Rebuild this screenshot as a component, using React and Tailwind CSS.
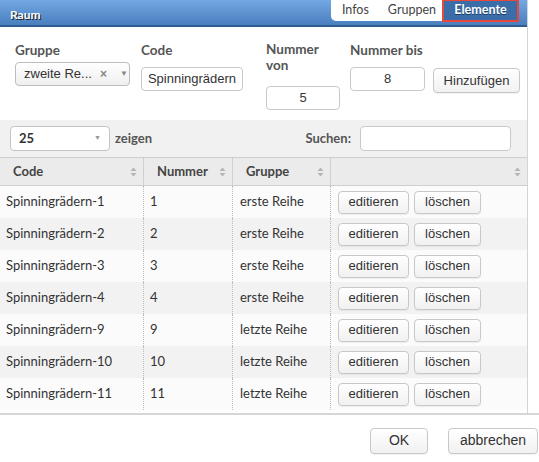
const ui = { fontFamily: '"Liberation Sans", Arial, sans-serif' };
const lato = { fontFamily: 'Lato, "Noto Sans", sans-serif' };

const rows = [
  ['Spinningrädern-1', '1', 'erste Reihe'],
  ['Spinningrädern-2', '2', 'erste Reihe'],
  ['Spinningrädern-3', '3', 'erste Reihe'],
  ['Spinningrädern-4', '4', 'erste Reihe'],
  ['Spinningrädern-9', '9', 'letzte Reihe'],
  ['Spinningrädern-10', '10', 'letzte Reihe'],
  ['Spinningrädern-11', '11', 'letzte Reihe'],
];

function SortIcon() {
  return (
    <svg width="7" height="10" viewBox="0 0 7 10" className="shrink-0">
      <path d="M3.5 0.5 L6.5 4 L0.5 4 Z" fill="#b5b5b5" />
      <path d="M3.5 9.5 L6.5 6 L0.5 6 Z" fill="#b5b5b5" />
    </svg>
  );
}

function Btn({ children, className = '' }) {
  return (
    <button
      style={ui}
      className={`rounded-[4px] border border-[#c8c8c8] bg-gradient-to-b from-white to-[#f1f1f1] text-[13px] text-[#333] shadow-[0_1px_1px_rgba(0,0,0,0.06)] ${className}`}
    >
      {children}
    </button>
  );
}

function Field({ value, className = '' }) {
  return (
    <div
      style={ui}
      className={`flex items-center justify-center rounded-[4px] border border-[#c9c9c9] bg-white text-[13px] text-[#333] ${className}`}
    >
      {value}
    </div>
  );
}

function Label({ children, className = '' }) {
  return (
    <div style={lato} className={`text-[13.5px] font-bold leading-[16px] text-[#555] ${className}`}>
      {children}
    </div>
  );
}

export default function App() {
  return (
    <div className="relative h-[462px] w-[539px] overflow-hidden bg-white">
      <div className="flex h-[413px] w-[528px] flex-col border-r border-[#d4d4d4]">
        {/* header */}
        <div className="flex h-[27px] shrink-0 items-start justify-between border-b-2 border-[#2f5d8f] bg-gradient-to-b from-[#72a8e3] to-[#4a7fbf] pl-[10px] pr-[8px]">
          <div
            style={lato}
            className="mt-[6px] text-[12px] font-bold text-white [text-shadow:1px_1px_0_#1d1d1d]"
          >
            Raum
          </div>
          <div
            style={lato}
            className="flex h-[21px] items-center rounded-b-[5px] bg-white pl-[11px] text-[12.5px] text-[#444]"
          >
            <span className="mr-[19px]">Infos</span>
            <span className="mr-[6px]">Gruppen</span>
            <span className="flex h-[23px] w-[77px] items-center justify-center border-2 border-[#e8483c] bg-[#3b6ea9] font-bold text-white [text-shadow:0_1px_0_#1d3c63]">
              Elemente
            </span>
          </div>
        </div>

        {/* form */}
        <div className="flex h-[93px] shrink-0 pl-[15px] pt-[14px]">
          <div className="w-[126px]">
            <Label className="mt-[1px]">Gruppe</Label>
            <div
              style={ui}
              className="mt-[4px] flex h-[24px] w-[115px] items-center rounded-[4px] border border-[#bdbdbd] bg-gradient-to-b from-white to-[#efefef] pl-[8px] text-[13px] text-[#333]"
            >
              <span>zweite Re...</span>
              <span className="ml-[8px] text-[12px] font-bold text-[#888]">×</span>
              <span className="ml-[13px] text-[8px] text-[#888]">▼</span>
            </div>
          </div>
          <div className="w-[125px]">
            <Label className="mt-[1px]">Code</Label>
            <Field value="Spinningrädern" className="mt-[9px] h-[24px] w-[102px]" />
          </div>
          <div className="w-[84px]">
            <Label>
              Nummer
              <br />
              von
            </Label>
            <Field value="5" className="mt-[13px] h-[24px] w-[74px]" />
          </div>
          <div className="w-[83px]">
            <Label className="mt-[1px]">Nummer bis</Label>
            <Field value="8" className="mt-[9px] h-[24px] w-[75px]" />
          </div>
          <div className="pt-[26px]">
            <Btn className="h-[25px] w-[87px]">Hinzufügen</Btn>
          </div>
        </div>

        {/* toolbar */}
        <div className="flex h-[37px] shrink-0 items-center bg-[#f1f1f1] pl-[10px] pr-[16px]">
          <div className="flex h-[25px] w-[100px] items-center justify-between rounded-[4px] border border-[#c4c4c4] bg-white pl-[8px] pr-[8px]">
            <span style={lato} className="text-[13px] font-bold text-[#333]">25</span>
            <span className="text-[7px] text-[#999]">▼</span>
          </div>
          <span style={lato} className="ml-[5px] text-[13px] font-bold text-[#555]">zeigen</span>
          <span style={lato} className="ml-auto text-[13px] font-bold text-[#555]">Suchen:</span>
          <div className="ml-[9px] h-[25px] w-[151px] rounded-[4px] border border-[#c9c9c9] bg-white" />
        </div>

        {/* table */}
        <div className="min-h-0 flex-1 overflow-hidden">
          <div
            style={lato}
            className="grid h-[29px] grid-cols-[144px_89px_98px_1fr] border-y border-[#cfcfcf] bg-[#ebebeb] text-[13px] font-bold text-[#444]"
          >
            {['Code', 'Nummer', 'Gruppe', ''].map((h, i) => (
              <div
                key={i}
                className={`flex items-center justify-between pl-[13px] pr-[6px] ${i < 3 ? 'border-r border-[#cfcfcf]' : ''}`}
              >
                <span>{h}</span>
                <SortIcon />
              </div>
            ))}
          </div>
          {rows.map((r, i) => (
            <div
              key={r[0]}
              style={lato}
              className={`grid h-[32px] grid-cols-[144px_89px_98px_1fr] text-[13px] text-[#333] ${i % 2 ? 'bg-[#f2f2f2]' : 'bg-[#fbfbfb]'}`}
            >
              <div className="flex items-center border-r border-dotted border-[#bbb] pl-[6px]">{r[0]}</div>
              <div className="flex items-center border-r border-dotted border-[#bbb] pl-[6px]">{r[1]}</div>
              <div className="flex items-center border-r border-dotted border-[#bbb] pl-[7px]">{r[2]}</div>
              <div className="flex items-center gap-[5px] pl-[7px]">
                <Btn className="h-[23px] w-[71px]">editieren</Btn>
                <Btn className="h-[23px] w-[67px]">löschen</Btn>
              </div>
            </div>
          ))}
        </div>
      </div>

      {/* footer */}
      <div className="flex h-[49px] items-center justify-end gap-[20px] border-t-2 border-[#d6d6d6] pr-[1px] pt-[4px]">
        <Btn className="h-[26px] w-[58px] text-[14px]">OK</Btn>
        <Btn className="h-[26px] w-[90px] text-[14px]">abbrechen</Btn>
      </div>
    </div>
  );
}
